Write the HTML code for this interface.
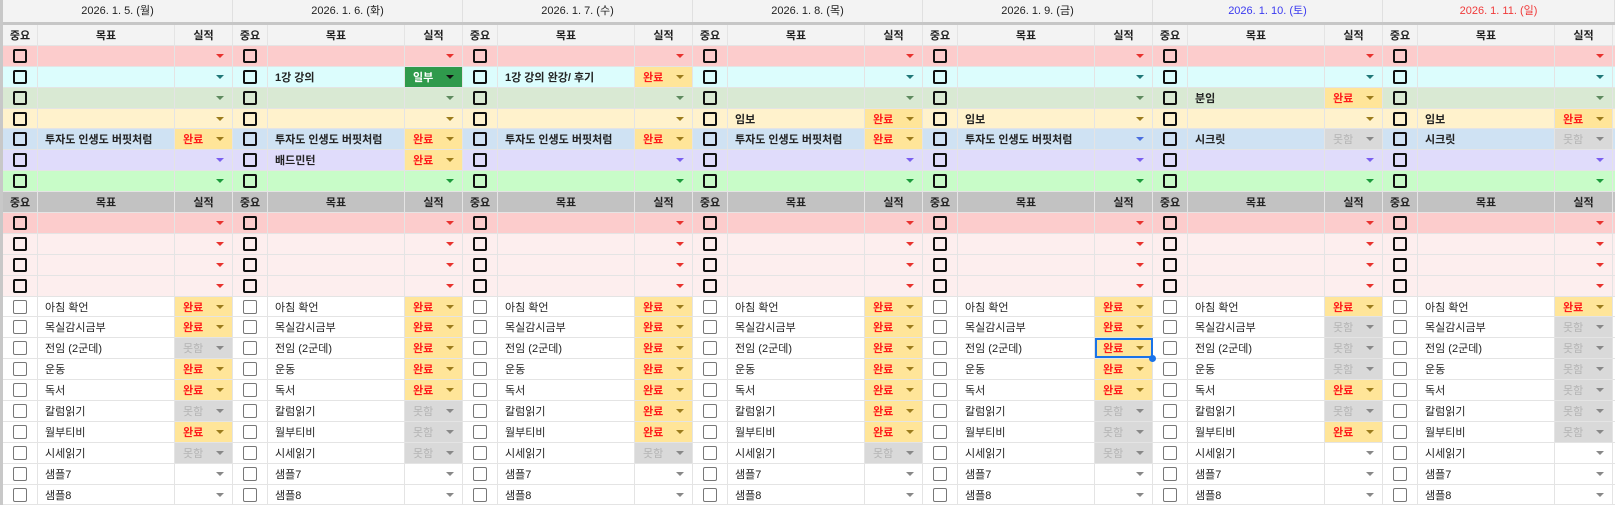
<!DOCTYPE html>
<html><head><meta charset="utf-8">
<style>
*{margin:0;padding:0;box-sizing:border-box}
body{width:1615px;height:505px;overflow:hidden;background:#c8c8c8;font-family:"Liberation Sans","Noto Sans CJK KR",sans-serif;font-size:11px;color:#222;position:relative}
.d{position:absolute;top:0;width:230px;background:#fff}
.h{height:22px;background:#f3f3f3;text-align:center;line-height:22px;font-size:11px;border-right:1px solid #e0e0e0;color:#222}
.g{height:3px;background:#c6c6c6}
.r{display:flex;height:20.9px;border-bottom:1px solid #e4e4e4}
.r>span{display:flex;align-items:center;height:100%;border-right:1px solid #e4e4e4;position:relative}
.c1{width:35px;justify-content:center}
.c2{width:137px;padding-left:7px;white-space:nowrap;overflow:hidden}
.c3{width:58px;padding-left:8px;font-weight:bold}
.hd>span{justify-content:center;font-weight:bold;padding:0}
.hd{background:#f3f3f3}
.hd2{background:#c2c2c2}
.t .c2{font-weight:bold}
.cb{width:14px;height:14px;border:2px solid #111;border-radius:2px}
.cw{width:14px;height:14px;border:1.5px solid #777;border-radius:2px;background:#fff}
.c3 u{position:absolute;right:8px;top:8px;width:0;height:0;border-left:4px solid transparent;border-right:4px solid transparent;border-top:4px solid #888}
.ar u{border-top-color:#e8322e}.at u{border-top-color:#207878}.ag u{border-top-color:#5e8a5e}.ay u{border-top-color:#9c7c1c}.ab u{border-top-color:#4a6ee0}.av u{border-top-color:#7a5ef0}.an u{border-top-color:#1a9a3a}.ak u{border-top-color:#111}
.ok{background:#ffe599;color:#ff1a1a}.ok u{border-top-color:#9c7c1c}
.ng{background:#d9d9d9;color:#b4b4b4;font-weight:normal!important}.ng u{border-top-color:#888}
.pt{background:#2f9a4c;color:#fff}.pt u{border-top-color:#111}
.p1{background:#fccccc}.p2{background:#dcfdfd}.p3{background:#d9e9d3}.p4{background:#fff2cc}.p5{background:#cfe2f3}.p6{background:#e0dcfb}.p7{background:#c8fcc8}.q{background:#fdeeee}
.sel{outline:2px solid #1a73e8;outline-offset:-2px}
.dot{position:absolute;right:-4px;bottom:-4px;width:7px;height:7px;border-radius:50%;background:#1a73e8;z-index:2}
</style></head><body>

<!-- DAY 1 -->
<div class="d" style="left:3px">
<div class="h">2026. 1. 5. (월)</div><div class="g"></div>
<div class="r hd"><span class="c1">중요</span><span class="c2">목표</span><span class="c3">실적</span></div>
<div class="r t p1"><span class="c1"><b class="cb"></b></span><span class="c2"></span><span class="c3 ar"><u></u></span></div>
<div class="r t p2"><span class="c1"><b class="cb"></b></span><span class="c2"></span><span class="c3 at"><u></u></span></div>
<div class="r t p3"><span class="c1"><b class="cb"></b></span><span class="c2"></span><span class="c3 ag"><u></u></span></div>
<div class="r t p4"><span class="c1"><b class="cb"></b></span><span class="c2"></span><span class="c3 ay"><u></u></span></div>
<div class="r t p5"><span class="c1"><b class="cb"></b></span><span class="c2">투자도 인생도 버핏처럼</span><span class="c3 ok">완료<u></u></span></div>
<div class="r t p6"><span class="c1"><b class="cb"></b></span><span class="c2"></span><span class="c3 av"><u></u></span></div>
<div class="r t p7"><span class="c1"><b class="cb"></b></span><span class="c2"></span><span class="c3 an"><u></u></span></div>
<div class="r hd hd2"><span class="c1">중요</span><span class="c2">목표</span><span class="c3">실적</span></div>
<div class="r p1"><span class="c1"><b class="cb"></b></span><span class="c2"></span><span class="c3 ar"><u></u></span></div>
<div class="r q"><span class="c1"><b class="cb"></b></span><span class="c2"></span><span class="c3 ar"><u></u></span></div>
<div class="r q"><span class="c1"><b class="cb"></b></span><span class="c2"></span><span class="c3 ar"><u></u></span></div>
<div class="r q"><span class="c1"><b class="cb"></b></span><span class="c2"></span><span class="c3 ar"><u></u></span></div>
<div class="r"><span class="c1"><b class="cw"></b></span><span class="c2">아침 확언</span><span class="c3 ok">완료<u></u></span></div>
<div class="r"><span class="c1"><b class="cw"></b></span><span class="c2">목실감시금부</span><span class="c3 ok">완료<u></u></span></div>
<div class="r"><span class="c1"><b class="cw"></b></span><span class="c2">전임 (2군데)</span><span class="c3 ng">못함<u></u></span></div>
<div class="r"><span class="c1"><b class="cw"></b></span><span class="c2">운동</span><span class="c3 ok">완료<u></u></span></div>
<div class="r"><span class="c1"><b class="cw"></b></span><span class="c2">독서</span><span class="c3 ok">완료<u></u></span></div>
<div class="r"><span class="c1"><b class="cw"></b></span><span class="c2">칼럼읽기</span><span class="c3 ng">못함<u></u></span></div>
<div class="r"><span class="c1"><b class="cw"></b></span><span class="c2">월부티비</span><span class="c3 ok">완료<u></u></span></div>
<div class="r"><span class="c1"><b class="cw"></b></span><span class="c2">시세읽기</span><span class="c3 ng">못함<u></u></span></div>
<div class="r"><span class="c1"><b class="cw"></b></span><span class="c2">샘플7</span><span class="c3"><u></u></span></div>
<div class="r"><span class="c1"><b class="cw"></b></span><span class="c2">샘플8</span><span class="c3"><u></u></span></div>
</div>

<!-- DAY 2 -->
<div class="d" style="left:233px">
<div class="h">2026. 1. 6. (화)</div><div class="g"></div>
<div class="r hd"><span class="c1">중요</span><span class="c2">목표</span><span class="c3">실적</span></div>
<div class="r t p1"><span class="c1"><b class="cb"></b></span><span class="c2"></span><span class="c3 ar"><u></u></span></div>
<div class="r t p2"><span class="c1"><b class="cb"></b></span><span class="c2">1강 강의</span><span class="c3 pt">일부<u></u></span></div>
<div class="r t p3"><span class="c1"><b class="cb"></b></span><span class="c2"></span><span class="c3 ag"><u></u></span></div>
<div class="r t p4"><span class="c1"><b class="cb"></b></span><span class="c2"></span><span class="c3 ay"><u></u></span></div>
<div class="r t p5"><span class="c1"><b class="cb"></b></span><span class="c2">투자도 인생도 버핏처럼</span><span class="c3 ok">완료<u></u></span></div>
<div class="r t p6"><span class="c1"><b class="cb"></b></span><span class="c2">배드민턴</span><span class="c3 ok">완료<u></u></span></div>
<div class="r t p7"><span class="c1"><b class="cb"></b></span><span class="c2"></span><span class="c3 an"><u></u></span></div>
<div class="r hd hd2"><span class="c1">중요</span><span class="c2">목표</span><span class="c3">실적</span></div>
<div class="r p1"><span class="c1"><b class="cb"></b></span><span class="c2"></span><span class="c3 ar"><u></u></span></div>
<div class="r q"><span class="c1"><b class="cb"></b></span><span class="c2"></span><span class="c3 ar"><u></u></span></div>
<div class="r q"><span class="c1"><b class="cb"></b></span><span class="c2"></span><span class="c3 ar"><u></u></span></div>
<div class="r q"><span class="c1"><b class="cb"></b></span><span class="c2"></span><span class="c3 ar"><u></u></span></div>
<div class="r"><span class="c1"><b class="cw"></b></span><span class="c2">아침 확언</span><span class="c3 ok">완료<u></u></span></div>
<div class="r"><span class="c1"><b class="cw"></b></span><span class="c2">목실감시금부</span><span class="c3 ok">완료<u></u></span></div>
<div class="r"><span class="c1"><b class="cw"></b></span><span class="c2">전임 (2군데)</span><span class="c3 ok">완료<u></u></span></div>
<div class="r"><span class="c1"><b class="cw"></b></span><span class="c2">운동</span><span class="c3 ok">완료<u></u></span></div>
<div class="r"><span class="c1"><b class="cw"></b></span><span class="c2">독서</span><span class="c3 ok">완료<u></u></span></div>
<div class="r"><span class="c1"><b class="cw"></b></span><span class="c2">칼럼읽기</span><span class="c3 ng">못함<u></u></span></div>
<div class="r"><span class="c1"><b class="cw"></b></span><span class="c2">월부티비</span><span class="c3 ng">못함<u></u></span></div>
<div class="r"><span class="c1"><b class="cw"></b></span><span class="c2">시세읽기</span><span class="c3 ng">못함<u></u></span></div>
<div class="r"><span class="c1"><b class="cw"></b></span><span class="c2">샘플7</span><span class="c3"><u></u></span></div>
<div class="r"><span class="c1"><b class="cw"></b></span><span class="c2">샘플8</span><span class="c3"><u></u></span></div>
</div>

<!-- DAY 3 -->
<div class="d" style="left:463px">
<div class="h">2026. 1. 7. (수)</div><div class="g"></div>
<div class="r hd"><span class="c1">중요</span><span class="c2">목표</span><span class="c3">실적</span></div>
<div class="r t p1"><span class="c1"><b class="cb"></b></span><span class="c2"></span><span class="c3 ar"><u></u></span></div>
<div class="r t p2"><span class="c1"><b class="cb"></b></span><span class="c2">1강 강의 완강/ 후기</span><span class="c3 ok">완료<u></u></span></div>
<div class="r t p3"><span class="c1"><b class="cb"></b></span><span class="c2"></span><span class="c3 ag"><u></u></span></div>
<div class="r t p4"><span class="c1"><b class="cb"></b></span><span class="c2"></span><span class="c3 ay"><u></u></span></div>
<div class="r t p5"><span class="c1"><b class="cb"></b></span><span class="c2">투자도 인생도 버핏처럼</span><span class="c3 ok">완료<u></u></span></div>
<div class="r t p6"><span class="c1"><b class="cb"></b></span><span class="c2"></span><span class="c3 av"><u></u></span></div>
<div class="r t p7"><span class="c1"><b class="cb"></b></span><span class="c2"></span><span class="c3 an"><u></u></span></div>
<div class="r hd hd2"><span class="c1">중요</span><span class="c2">목표</span><span class="c3">실적</span></div>
<div class="r p1"><span class="c1"><b class="cb"></b></span><span class="c2"></span><span class="c3 ar"><u></u></span></div>
<div class="r q"><span class="c1"><b class="cb"></b></span><span class="c2"></span><span class="c3 ar"><u></u></span></div>
<div class="r q"><span class="c1"><b class="cb"></b></span><span class="c2"></span><span class="c3 ar"><u></u></span></div>
<div class="r q"><span class="c1"><b class="cb"></b></span><span class="c2"></span><span class="c3 ar"><u></u></span></div>
<div class="r"><span class="c1"><b class="cw"></b></span><span class="c2">아침 확언</span><span class="c3 ok">완료<u></u></span></div>
<div class="r"><span class="c1"><b class="cw"></b></span><span class="c2">목실감시금부</span><span class="c3 ok">완료<u></u></span></div>
<div class="r"><span class="c1"><b class="cw"></b></span><span class="c2">전임 (2군데)</span><span class="c3 ok">완료<u></u></span></div>
<div class="r"><span class="c1"><b class="cw"></b></span><span class="c2">운동</span><span class="c3 ok">완료<u></u></span></div>
<div class="r"><span class="c1"><b class="cw"></b></span><span class="c2">독서</span><span class="c3 ok">완료<u></u></span></div>
<div class="r"><span class="c1"><b class="cw"></b></span><span class="c2">칼럼읽기</span><span class="c3 ok">완료<u></u></span></div>
<div class="r"><span class="c1"><b class="cw"></b></span><span class="c2">월부티비</span><span class="c3 ok">완료<u></u></span></div>
<div class="r"><span class="c1"><b class="cw"></b></span><span class="c2">시세읽기</span><span class="c3 ng">못함<u></u></span></div>
<div class="r"><span class="c1"><b class="cw"></b></span><span class="c2">샘플7</span><span class="c3"><u></u></span></div>
<div class="r"><span class="c1"><b class="cw"></b></span><span class="c2">샘플8</span><span class="c3"><u></u></span></div>
</div>

<!-- DAY 4 -->
<div class="d" style="left:693px">
<div class="h">2026. 1. 8. (목)</div><div class="g"></div>
<div class="r hd"><span class="c1">중요</span><span class="c2">목표</span><span class="c3">실적</span></div>
<div class="r t p1"><span class="c1"><b class="cb"></b></span><span class="c2"></span><span class="c3 ar"><u></u></span></div>
<div class="r t p2"><span class="c1"><b class="cb"></b></span><span class="c2"></span><span class="c3 at"><u></u></span></div>
<div class="r t p3"><span class="c1"><b class="cb"></b></span><span class="c2"></span><span class="c3 ag"><u></u></span></div>
<div class="r t p4"><span class="c1"><b class="cb"></b></span><span class="c2">임보</span><span class="c3 ok">완료<u></u></span></div>
<div class="r t p5"><span class="c1"><b class="cb"></b></span><span class="c2">투자도 인생도 버핏처럼</span><span class="c3 ok">완료<u></u></span></div>
<div class="r t p6"><span class="c1"><b class="cb"></b></span><span class="c2"></span><span class="c3 av"><u></u></span></div>
<div class="r t p7"><span class="c1"><b class="cb"></b></span><span class="c2"></span><span class="c3 an"><u></u></span></div>
<div class="r hd hd2"><span class="c1">중요</span><span class="c2">목표</span><span class="c3">실적</span></div>
<div class="r p1"><span class="c1"><b class="cb"></b></span><span class="c2"></span><span class="c3 ar"><u></u></span></div>
<div class="r q"><span class="c1"><b class="cb"></b></span><span class="c2"></span><span class="c3 ar"><u></u></span></div>
<div class="r q"><span class="c1"><b class="cb"></b></span><span class="c2"></span><span class="c3 ar"><u></u></span></div>
<div class="r q"><span class="c1"><b class="cb"></b></span><span class="c2"></span><span class="c3 ar"><u></u></span></div>
<div class="r"><span class="c1"><b class="cw"></b></span><span class="c2">아침 확언</span><span class="c3 ok">완료<u></u></span></div>
<div class="r"><span class="c1"><b class="cw"></b></span><span class="c2">목실감시금부</span><span class="c3 ok">완료<u></u></span></div>
<div class="r"><span class="c1"><b class="cw"></b></span><span class="c2">전임 (2군데)</span><span class="c3 ok">완료<u></u></span></div>
<div class="r"><span class="c1"><b class="cw"></b></span><span class="c2">운동</span><span class="c3 ok">완료<u></u></span></div>
<div class="r"><span class="c1"><b class="cw"></b></span><span class="c2">독서</span><span class="c3 ok">완료<u></u></span></div>
<div class="r"><span class="c1"><b class="cw"></b></span><span class="c2">칼럼읽기</span><span class="c3 ok">완료<u></u></span></div>
<div class="r"><span class="c1"><b class="cw"></b></span><span class="c2">월부티비</span><span class="c3 ok">완료<u></u></span></div>
<div class="r"><span class="c1"><b class="cw"></b></span><span class="c2">시세읽기</span><span class="c3 ng">못함<u></u></span></div>
<div class="r"><span class="c1"><b class="cw"></b></span><span class="c2">샘플7</span><span class="c3"><u></u></span></div>
<div class="r"><span class="c1"><b class="cw"></b></span><span class="c2">샘플8</span><span class="c3"><u></u></span></div>
</div>

<!-- DAY 5 -->
<div class="d" style="left:923px">
<div class="h">2026. 1. 9. (금)</div><div class="g"></div>
<div class="r hd"><span class="c1">중요</span><span class="c2">목표</span><span class="c3">실적</span></div>
<div class="r t p1"><span class="c1"><b class="cb"></b></span><span class="c2"></span><span class="c3 ar"><u></u></span></div>
<div class="r t p2"><span class="c1"><b class="cb"></b></span><span class="c2"></span><span class="c3 at"><u></u></span></div>
<div class="r t p3"><span class="c1"><b class="cb"></b></span><span class="c2"></span><span class="c3 ag"><u></u></span></div>
<div class="r t p4"><span class="c1"><b class="cb"></b></span><span class="c2">임보</span><span class="c3 ay"><u></u></span></div>
<div class="r t p5"><span class="c1"><b class="cb"></b></span><span class="c2">투자도 인생도 버핏처럼</span><span class="c3 ab"><u></u></span></div>
<div class="r t p6"><span class="c1"><b class="cb"></b></span><span class="c2"></span><span class="c3 av"><u></u></span></div>
<div class="r t p7"><span class="c1"><b class="cb"></b></span><span class="c2"></span><span class="c3 an"><u></u></span></div>
<div class="r hd hd2"><span class="c1">중요</span><span class="c2">목표</span><span class="c3">실적</span></div>
<div class="r p1"><span class="c1"><b class="cb"></b></span><span class="c2"></span><span class="c3 ar"><u></u></span></div>
<div class="r q"><span class="c1"><b class="cb"></b></span><span class="c2"></span><span class="c3 ar"><u></u></span></div>
<div class="r q"><span class="c1"><b class="cb"></b></span><span class="c2"></span><span class="c3 ar"><u></u></span></div>
<div class="r q"><span class="c1"><b class="cb"></b></span><span class="c2"></span><span class="c3 ar"><u></u></span></div>
<div class="r"><span class="c1"><b class="cw"></b></span><span class="c2">아침 확언</span><span class="c3 ok">완료<u></u></span></div>
<div class="r"><span class="c1"><b class="cw"></b></span><span class="c2">목실감시금부</span><span class="c3 ok">완료<u></u></span></div>
<div class="r"><span class="c1"><b class="cw"></b></span><span class="c2">전임 (2군데)</span><span class="c3 ok sel">완료<u></u><i class="dot"></i></span></div>
<div class="r"><span class="c1"><b class="cw"></b></span><span class="c2">운동</span><span class="c3 ok">완료<u></u></span></div>
<div class="r"><span class="c1"><b class="cw"></b></span><span class="c2">독서</span><span class="c3 ok">완료<u></u></span></div>
<div class="r"><span class="c1"><b class="cw"></b></span><span class="c2">칼럼읽기</span><span class="c3 ng">못함<u></u></span></div>
<div class="r"><span class="c1"><b class="cw"></b></span><span class="c2">월부티비</span><span class="c3 ng">못함<u></u></span></div>
<div class="r"><span class="c1"><b class="cw"></b></span><span class="c2">시세읽기</span><span class="c3 ng">못함<u></u></span></div>
<div class="r"><span class="c1"><b class="cw"></b></span><span class="c2">샘플7</span><span class="c3"><u></u></span></div>
<div class="r"><span class="c1"><b class="cw"></b></span><span class="c2">샘플8</span><span class="c3"><u></u></span></div>
</div>

<!-- DAY 6 -->
<div class="d" style="left:1153px">
<div class="h" style="color:#3a3af0">2026. 1. 10. (토)</div><div class="g"></div>
<div class="r hd"><span class="c1">중요</span><span class="c2">목표</span><span class="c3">실적</span></div>
<div class="r t p1"><span class="c1"><b class="cb"></b></span><span class="c2"></span><span class="c3 ar"><u></u></span></div>
<div class="r t p2"><span class="c1"><b class="cb"></b></span><span class="c2"></span><span class="c3 at"><u></u></span></div>
<div class="r t p3"><span class="c1"><b class="cb"></b></span><span class="c2">분임</span><span class="c3 ok">완료<u></u></span></div>
<div class="r t p4"><span class="c1"><b class="cb"></b></span><span class="c2"></span><span class="c3 ay"><u></u></span></div>
<div class="r t p5"><span class="c1"><b class="cb"></b></span><span class="c2">시크릿</span><span class="c3 ng">못함<u></u></span></div>
<div class="r t p6"><span class="c1"><b class="cb"></b></span><span class="c2"></span><span class="c3 av"><u></u></span></div>
<div class="r t p7"><span class="c1"><b class="cb"></b></span><span class="c2"></span><span class="c3 an"><u></u></span></div>
<div class="r hd hd2"><span class="c1">중요</span><span class="c2">목표</span><span class="c3">실적</span></div>
<div class="r p1"><span class="c1"><b class="cb"></b></span><span class="c2"></span><span class="c3 ar"><u></u></span></div>
<div class="r q"><span class="c1"><b class="cb"></b></span><span class="c2"></span><span class="c3 ar"><u></u></span></div>
<div class="r q"><span class="c1"><b class="cb"></b></span><span class="c2"></span><span class="c3 ar"><u></u></span></div>
<div class="r q"><span class="c1"><b class="cb"></b></span><span class="c2"></span><span class="c3 ar"><u></u></span></div>
<div class="r"><span class="c1"><b class="cw"></b></span><span class="c2">아침 확언</span><span class="c3 ok">완료<u></u></span></div>
<div class="r"><span class="c1"><b class="cw"></b></span><span class="c2">목실감시금부</span><span class="c3 ng">못함<u></u></span></div>
<div class="r"><span class="c1"><b class="cw"></b></span><span class="c2">전임 (2군데)</span><span class="c3 ng">못함<u></u></span></div>
<div class="r"><span class="c1"><b class="cw"></b></span><span class="c2">운동</span><span class="c3 ng">못함<u></u></span></div>
<div class="r"><span class="c1"><b class="cw"></b></span><span class="c2">독서</span><span class="c3 ok">완료<u></u></span></div>
<div class="r"><span class="c1"><b class="cw"></b></span><span class="c2">칼럼읽기</span><span class="c3 ng">못함<u></u></span></div>
<div class="r"><span class="c1"><b class="cw"></b></span><span class="c2">월부티비</span><span class="c3 ok">완료<u></u></span></div>
<div class="r"><span class="c1"><b class="cw"></b></span><span class="c2">시세읽기</span><span class="c3"><u></u></span></div>
<div class="r"><span class="c1"><b class="cw"></b></span><span class="c2">샘플7</span><span class="c3"><u></u></span></div>
<div class="r"><span class="c1"><b class="cw"></b></span><span class="c2">샘플8</span><span class="c3"><u></u></span></div>
</div>

<!-- DAY 7 -->
<div class="d" style="left:1383px;width:232px">
<div class="h" style="color:#f03a3a">2026. 1. 11. (일)</div><div class="g"></div>
<div class="r hd"><span class="c1">중요</span><span class="c2">목표</span><span class="c3">실적</span></div>
<div class="r t p1"><span class="c1"><b class="cb"></b></span><span class="c2"></span><span class="c3 ar"><u></u></span></div>
<div class="r t p2"><span class="c1"><b class="cb"></b></span><span class="c2"></span><span class="c3 at"><u></u></span></div>
<div class="r t p3"><span class="c1"><b class="cb"></b></span><span class="c2"></span><span class="c3 ag"><u></u></span></div>
<div class="r t p4"><span class="c1"><b class="cb"></b></span><span class="c2">임보</span><span class="c3 ok">완료<u></u></span></div>
<div class="r t p5"><span class="c1"><b class="cb"></b></span><span class="c2">시크릿</span><span class="c3 ng">못함<u></u></span></div>
<div class="r t p6"><span class="c1"><b class="cb"></b></span><span class="c2"></span><span class="c3 av"><u></u></span></div>
<div class="r t p7"><span class="c1"><b class="cb"></b></span><span class="c2"></span><span class="c3 an"><u></u></span></div>
<div class="r hd hd2"><span class="c1">중요</span><span class="c2">목표</span><span class="c3">실적</span></div>
<div class="r p1"><span class="c1"><b class="cb"></b></span><span class="c2"></span><span class="c3 ar"><u></u></span></div>
<div class="r q"><span class="c1"><b class="cb"></b></span><span class="c2"></span><span class="c3 ar"><u></u></span></div>
<div class="r q"><span class="c1"><b class="cb"></b></span><span class="c2"></span><span class="c3 ar"><u></u></span></div>
<div class="r q"><span class="c1"><b class="cb"></b></span><span class="c2"></span><span class="c3 ar"><u></u></span></div>
<div class="r"><span class="c1"><b class="cw"></b></span><span class="c2">아침 확언</span><span class="c3 ok">완료<u></u></span></div>
<div class="r"><span class="c1"><b class="cw"></b></span><span class="c2">목실감시금부</span><span class="c3 ng">못함<u></u></span></div>
<div class="r"><span class="c1"><b class="cw"></b></span><span class="c2">전임 (2군데)</span><span class="c3 ng">못함<u></u></span></div>
<div class="r"><span class="c1"><b class="cw"></b></span><span class="c2">운동</span><span class="c3 ng">못함<u></u></span></div>
<div class="r"><span class="c1"><b class="cw"></b></span><span class="c2">독서</span><span class="c3 ng">못함<u></u></span></div>
<div class="r"><span class="c1"><b class="cw"></b></span><span class="c2">칼럼읽기</span><span class="c3 ng">못함<u></u></span></div>
<div class="r"><span class="c1"><b class="cw"></b></span><span class="c2">월부티비</span><span class="c3 ng">못함<u></u></span></div>
<div class="r"><span class="c1"><b class="cw"></b></span><span class="c2">시세읽기</span><span class="c3"><u></u></span></div>
<div class="r"><span class="c1"><b class="cw"></b></span><span class="c2">샘플7</span><span class="c3"><u></u></span></div>
<div class="r"><span class="c1"><b class="cw"></b></span><span class="c2">샘플8</span><span class="c3"><u></u></span></div>
</div>
<style>.d:last-child .c3{width:60px}</style>
</body></html>
